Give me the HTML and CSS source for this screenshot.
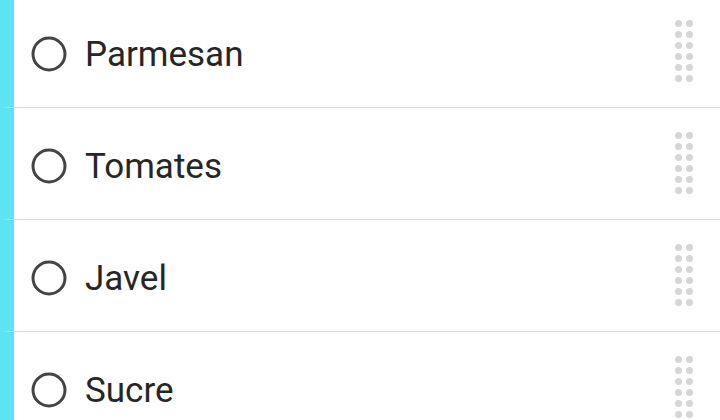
FILE: index.html
```html
<!DOCTYPE html>
<html lang="fr">
<head>
  <meta charset="UTF-8">
  <meta name="viewport" content="width=device-width, initial-scale=1.0">
  <title>Liste de courses</title>
  <link rel="stylesheet" href="styles.css">
</head>
<body>
  <ul class="item-list">
    <li class="item">
      <svg class="check" viewBox="0 0 36 36"><circle cx="18" cy="18" r="16"/></svg>
      <span class="item-name">Parmesan</span>
      <div class="handle"><i></i><i></i><i></i><i></i><i></i><i></i><i></i><i></i><i></i><i></i><i></i><i></i></div>
    </li>
    <li class="item">
      <svg class="check" viewBox="0 0 36 36"><circle cx="18" cy="18" r="16"/></svg>
      <span class="item-name">Tomates</span>
      <div class="handle"><i></i><i></i><i></i><i></i><i></i><i></i><i></i><i></i><i></i><i></i><i></i><i></i></div>
    </li>
    <li class="item">
      <svg class="check" viewBox="0 0 36 36"><circle cx="18" cy="18" r="16"/></svg>
      <span class="item-name">Javel</span>
      <div class="handle"><i></i><i></i><i></i><i></i><i></i><i></i><i></i><i></i><i></i><i></i><i></i><i></i></div>
    </li>
    <li class="item">
      <svg class="check" viewBox="0 0 36 36"><circle cx="18" cy="18" r="16"/></svg>
      <span class="item-name">Sucre</span>
      <div class="handle"><i></i><i></i><i></i><i></i><i></i><i></i><i></i><i></i><i></i><i></i><i></i><i></i></div>
    </li>
  </ul>
</body>
</html>
```

FILE: styles.css
```css
* {
  box-sizing: border-box;
}
body {
  margin: 0;
  background: #fff;
  font-family: Roboto, 'Noto Sans', sans-serif;
  overflow: hidden;
}
.item-list {
  list-style: none;
  margin: -4px 0 0;
  padding: 0;
}
.item {
  display: flex;
  align-items: center;
  height: 112px;
  padding: 0 27px 0 17px;
  border-left: 14px solid #5ee3f5;
  border-bottom: 1px solid #dedede;
}
.check {
  width: 36px;
  height: 36px;
  flex: none;
  margin-top: 4px;
}
.check circle {
  fill: none;
  stroke: #444;
  stroke-width: 3;
}
.item-name {
  flex: 1;
  margin: 5px 0 0 18px;
  font-size: 35px;
  color: #262626;
}
.handle {
  display: grid;
  grid-template-columns: 7px 7px;
  gap: 4px;
  margin-top: -2px;
}
.handle i {
  width: 7px;
  height: 7px;
  border-radius: 50%;
  background: #d6d6d6;
}
```
